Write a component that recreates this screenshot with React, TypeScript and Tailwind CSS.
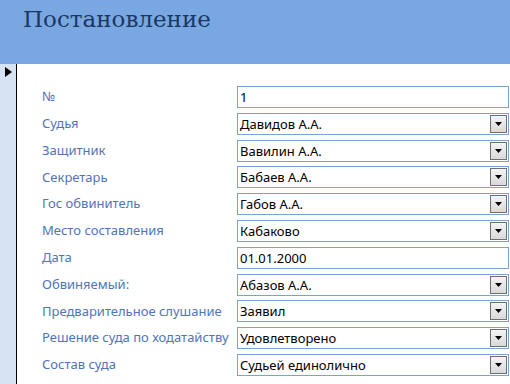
import React from 'react';

type Field = { label: string; value: string; combo: boolean };

const fields: Field[] = [
  { label: '№', value: '1', combo: false },
  { label: 'Судья', value: 'Давидов А.А.', combo: true },
  { label: 'Защитник', value: 'Вавилин А.А.', combo: true },
  { label: 'Секретарь', value: 'Бабаев А.А.', combo: true },
  { label: 'Гос обвинитель', value: 'Габов А.А.', combo: true },
  { label: 'Место составления', value: 'Кабаково', combo: true },
  { label: 'Дата', value: '01.01.2000', combo: false },
  { label: 'Обвиняемый:', value: 'Абазов А.А.', combo: true },
  { label: 'Предварительное слушание', value: 'Заявил', combo: true },
  { label: 'Решение суда по ходатайству', value: 'Удовлетворено', combo: true },
  { label: 'Состав суда', value: 'Судьей единолично', combo: true },
];

function DropButton() {
  return (
    <div className="absolute right-px top-px bottom-px w-[17px] border border-[#6f6f6f] bg-gradient-to-b from-[#f4f4f4] to-[#d9d9d9] flex items-center justify-center">
      <svg width="7" height="4" viewBox="0 0 7 4">
        <path d="M0 0 L7 0 L3.5 4 Z" fill="#000" />
      </svg>
    </div>
  );
}

export default function App() {
  return (
    <div className="w-[510px] h-[384px] bg-white overflow-hidden flex flex-col font-['Noto_Sans',sans-serif]">
      <div className="h-[64px] bg-[#79a7e1] pl-[23px] pt-[2px] shrink-0">
        <h1 className="text-[23px] leading-[34px] text-[#1b3764] font-['DejaVu_Serif',serif]">Постановление</h1>
      </div>
      <div className="flex flex-1">
        <div className="w-[17px] shrink-0 bg-[#d5e3f3] border-r border-black pt-[3px] pl-[5px]">
          <svg width="7" height="10" viewBox="0 0 7 10">
            <path d="M0 0 L7 5 L0 10 Z" fill="#000" />
          </svg>
        </div>
        <div className="flex-1 pt-[22px] flex flex-col gap-[4.8px]">
          {fields.map((f) => (
            <div key={f.label} className="flex items-center h-[22px]">
              <div className="w-[220px] pl-[25px] text-[13px] text-[#4f74b9] whitespace-nowrap">{f.label}</div>
              <div className="relative w-[272px] h-[22px] border border-[#7ca1d7] pl-[2px] text-[13px] text-black leading-[20px] whitespace-nowrap">
                {f.value}
                {f.combo && <DropButton />}
              </div>
            </div>
          ))}
        </div>
      </div>
    </div>
  );
}
